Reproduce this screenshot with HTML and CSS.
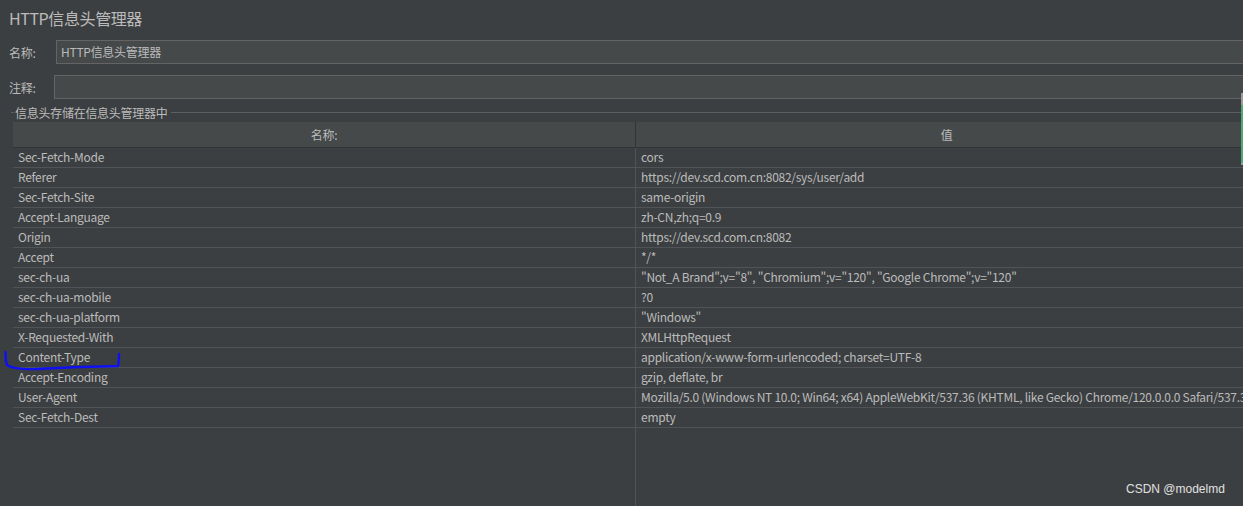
FILE: index.html
```html
<!DOCTYPE html>
<html lang="zh-CN">
<head>
<meta charset="utf-8">
<title>HTTP信息头管理器</title>
<link rel="stylesheet" href="styles.css">
</head>
<body>
<div class="page">
  <div class="title">HTTP信息头管理器</div>
  <div class="field field-name">
    <span class="label">名称:</span>
    <div class="input">HTTP信息头管理器</div>
  </div>
  <div class="field field-comment">
    <span class="label">注释:</span>
    <div class="input"></div>
  </div>
  <div class="group">
    <span class="group-dash"></span>
    <span class="group-text">信息头存储在信息头管理器中</span>
    <span class="group-line"></span>
  </div>
  <div class="table">
    <div class="thead">
      <div class="th">名称:</div>
      <div class="th">值</div>
    </div>
    <div class="tbody">
      <div class="tr"><div class="td">Sec-Fetch-Mode</div><div class="td">cors</div></div>
      <div class="tr"><div class="td">Referer</div><div class="td">https://dev.scd.com.cn:8082/sys/user/add</div></div>
      <div class="tr"><div class="td">Sec-Fetch-Site</div><div class="td">same-origin</div></div>
      <div class="tr"><div class="td">Accept-Language</div><div class="td">zh-CN,zh;q=0.9</div></div>
      <div class="tr"><div class="td">Origin</div><div class="td">https://dev.scd.com.cn:8082</div></div>
      <div class="tr"><div class="td">Accept</div><div class="td">*/*</div></div>
      <div class="tr"><div class="td">sec-ch-ua</div><div class="td">"Not_A Brand";v="8", "Chromium";v="120", "Google Chrome";v="120"</div></div>
      <div class="tr"><div class="td">sec-ch-ua-mobile</div><div class="td">?0</div></div>
      <div class="tr"><div class="td">sec-ch-ua-platform</div><div class="td">"Windows"</div></div>
      <div class="tr"><div class="td">X-Requested-With</div><div class="td">XMLHttpRequest</div></div>
      <div class="tr"><div class="td">Content-Type</div><div class="td">application/x-www-form-urlencoded; charset=UTF-8</div></div>
      <div class="tr"><div class="td">Accept-Encoding</div><div class="td">gzip, deflate, br</div></div>
      <div class="tr"><div class="td">User-Agent</div><div class="td">Mozilla/5.0 (Windows NT 10.0; Win64; x64) AppleWebKit/537.36 (KHTML, like Gecko) Chrome/120.0.0.0 Safari/537.36</div></div>
      <div class="tr"><div class="td">Sec-Fetch-Dest</div><div class="td">empty</div></div>
      <div class="tfill"><div class="tfill-col"></div><div class="tfill-col"></div></div>
    </div>
  </div>
</div>
<svg class="mark" width="124" height="24" viewBox="0 0 124 24" aria-hidden="true">
  <path d="M1.5 1 C1.5 6 2 11 3 14 C9 18 22 19 42 17.5 C70 16 95 15.5 114 15 C115 11 115 7 115 3" fill="none" stroke="#1010f5" stroke-width="2.4" stroke-linecap="round" stroke-linejoin="round"/>
</svg>
<div class="scroll-edge"><div class="scroll-thumb"></div></div>
<div class="watermark">CSDN @modelmd</div>
</body>
</html>
```
FILE: styles.css
```css
html, body {
  margin: 0;
  padding: 0;
  height: 100%;
  overflow: hidden;
  background: #3c3f41;
}
body {
  font-family: "Noto Sans CJK SC", "Noto Sans", sans-serif;
  font-size: 12px;
  letter-spacing: -0.27px;
  color: #bbbbbb;
  position: relative;
}
.page {
  display: flex;
  flex-direction: column;
  height: 506px;
}
.title {
  height: 40px;
  line-height: 37px;
  padding-left: 9px;
  font-size: 16px;
  letter-spacing: -0.4px;
  color: #bbbbbb;
  flex: none;
}
.field {
  display: flex;
  align-items: center;
  height: 24px;
  flex: none;
}
.field .label {
  padding-left: 9px;
  font-size: 12px;
}
.field-name .label { width: 47px; }
.field-comment .label { width: 45px; }
.field-comment { margin-top: 11px; }
.input {
  flex: 1;
  height: 24px;
  box-sizing: border-box;
  border: 1px solid #646464;
  border-right: none;
  background: #45494a;
  padding-left: 4px;
  line-height: 21px;
  color: #bbbbbb;
}
.group {
  display: flex;
  align-items: center;
  height: 16px;
  margin-top: 5px;
  flex: none;
}
.group-dash {
  width: 3px;
  height: 1px;
  margin-left: 11px;
  background: #5e6060;
}
.group-text {
  padding: 0 3px 0 1px;
  font-size: 12px;
  line-height: 15px;
}
.group-line {
  flex: 1;
  height: 1px;
  background: #5e6060;
}
.table {
  margin-top: 2px;
  margin-left: 13px;
  width: 1244px;
  flex: 1;
  display: flex;
  flex-direction: column;
}
.thead {
  display: grid;
  grid-template-columns: 622px 622px;
  height: 26px;
  box-sizing: border-box;
  border-bottom: 1px solid #323435;
  background: #45494a;
  flex: none;
}
.th {
  text-align: center;
  line-height: 25px;
}
.th + .th { border-left: 1px solid #323435; }
.tbody {
  flex: 1;
  display: flex;
  flex-direction: column;
}
.tr {
  display: grid;
  grid-template-columns: 622px 622px;
  height: 20px;
  box-sizing: border-box;
  border-bottom: 1px solid #515456;
  flex: none;
}
.td {
  line-height: 18px;
  padding-left: 5px;
  white-space: nowrap;
  overflow: hidden;
}
.td + .td { border-left: 1px solid #515456; }
.tfill {
  flex: 1;
  display: grid;
  grid-template-columns: 622px 622px;
}
.tfill-col + .tfill-col { border-left: 1px solid #515456; }
.mark {
  position: absolute;
  left: 4px;
  top: 351px;
}
.scroll-edge {
  position: absolute;
  left: 1241px;
  top: 93px;
  width: 2px;
  height: 72px;
  background: #9a9c9e;
}
.scroll-thumb {
  margin-top: 12px;
  height: 58px;
  background: #4fa878;
}
.watermark {
  position: absolute;
  left: 1126px;
  top: 482px;
  font-family: "Liberation Sans", "Noto Sans", sans-serif;
  font-size: 12px;
  letter-spacing: 0;
  color: #e0e0e0;
}
```
